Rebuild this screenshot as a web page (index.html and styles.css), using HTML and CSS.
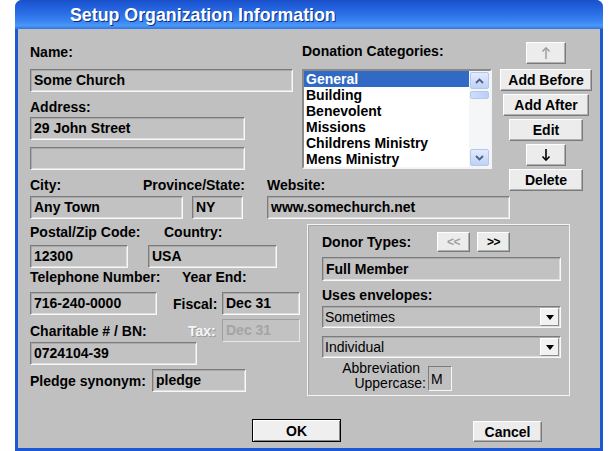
FILE: index.html
```html
<!DOCTYPE html>
<html>
<head>
<meta charset="utf-8">
<link rel="stylesheet" href="styles.css">
</head>
<body>
<div class="window">
  <div class="titlebar"><span class="title">Setup Organization Information</span></div>
  <div class="body">
    <div class="top">
      <div class="col-left">
        <div class="label lbl-name">Name:</div>
        <div class="field f-name">Some Church</div>
        <div class="label lbl-address">Address:</div>
        <div class="field f-addr1">29 John Street</div>
        <div class="field f-addr2"></div>
      </div>
      <div class="col-cats">
        <div class="label lbl-cats">Donation Categories:</div>
        <div class="listbox">
          <div class="list-items">
            <div class="item selected">General</div>
            <div class="item">Building</div>
            <div class="item">Benevolent</div>
            <div class="item">Missions</div>
            <div class="item">Childrens Ministry</div>
            <div class="item">Mens Ministry</div>
          </div>
          <div class="scrollbar">
            <div class="sb-btn"><svg width="9" height="6" viewBox="0 0 9 6"><polyline points="1,5 4.5,1.5 8,5" fill="none" stroke="#4d6185" stroke-width="1.8"/></svg></div>
            <div class="sb-thumb"></div>
            <div class="sb-track"></div>
            <div class="sb-btn"><svg width="9" height="6" viewBox="0 0 9 6"><polyline points="1,1 4.5,4.5 8,1" fill="none" stroke="#4d6185" stroke-width="1.8"/></svg></div>
          </div>
        </div>
      </div>
      <div class="col-btns">
        <div class="btn btn-arrow b-up disabled"><svg width="10" height="14" viewBox="0 0 10 14"><line x1="5" y1="2" x2="5" y2="13" stroke="#9a9a9a" stroke-width="1.4"/><polyline points="1.5,5.5 5,1.8 8.5,5.5" fill="none" stroke="#9a9a9a" stroke-width="1.4"/></svg></div>
        <div class="btn b-addbefore">Add Before</div>
        <div class="btn b-addafter">Add After</div>
        <div class="btn b-edit">Edit</div>
        <div class="btn btn-arrow b-down"><svg width="10" height="14" viewBox="0 0 10 14"><line x1="5" y1="1" x2="5" y2="12" stroke="#000" stroke-width="1.6"/><polyline points="1.5,8.5 5,12.2 8.5,8.5" fill="none" stroke="#000" stroke-width="1.6"/></svg></div>
        <div class="btn b-delete">Delete</div>
      </div>
    </div>

    <div class="row city-labels">
      <span class="label w-city">City:</span>
      <span class="label w-prov">Province/State:</span>
      <span class="label">Website:</span>
    </div>
    <div class="row city-fields">
      <div class="field f-city">Any Town</div>
      <div class="field f-state">NY</div>
      <div class="field f-web">www.somechurch.net</div>
    </div>

    <div class="lower">
      <div class="lower-left">
        <div class="row postal-labels">
          <span class="label w-postal">Postal/Zip Code:</span>
          <span class="label">Country:</span>
        </div>
        <div class="row postal-fields">
          <div class="field f-postal">12300</div>
          <div class="field f-country">USA</div>
        </div>
        <div class="row tel-labels">
          <span class="label w-tel">Telephone Number:</span>
          <span class="label">Year End:</span>
        </div>
        <div class="row phone-row">
          <div class="field f-phone">716-240-0000</div>
          <span class="label w-fiscal">Fiscal:</span>
          <div class="field f-date">Dec 31</div>
        </div>
        <div class="row char-row">
          <span class="label w-char">Charitable # / BN:</span>
          <span class="label w-tax disabled-label">Tax:</span>
          <div class="field f-date field-disabled">Dec 31</div>
        </div>
        <div class="field f-char">0724104-39</div>
        <div class="row pledge-row">
          <span class="label w-pledge">Pledge synonym:</span>
          <div class="field f-pledge">pledge</div>
        </div>
      </div>

      <div class="group">
        <div class="row donor-row">
          <span class="label w-donor">Donor Types:</span>
          <div class="btn btn-small disabled">&lt;&lt;</div>
          <div class="btn btn-small b-next">&gt;&gt;</div>
        </div>
        <div class="field f-member">Full Member</div>
        <div class="label lbl-env">Uses envelopes:</div>
        <div class="field combo c-first"><span>Sometimes</span><span class="dd"><span class="tri"></span></span></div>
        <div class="field combo c-second"><span>Individual</span><span class="dd"><span class="tri"></span></span></div>
        <div class="row abbr-row">
          <div class="abbr-label"><span class="abbr-1">Abbreviation</span><br>Uppercase:</div>
          <div class="mbox">M</div>
        </div>
      </div>
    </div>

    <div class="footer">
      <div class="btn b-ok">OK</div>
      <div class="btn b-cancel">Cancel</div>
    </div>
  </div>
</div>
</body>
</html>
```

FILE: styles.css
```css
* { box-sizing: border-box; }

body {
  margin: 0;
  background: #ffffff;
  font-family: "Liberation Sans", Arial, sans-serif;
  font-size: 14px;
  font-weight: bold;
  color: #000;
}

.window {
  margin-left: 15px;
  width: 588px;
  height: 451px;
  border-radius: 7px 7px 0 0;
  overflow: hidden;
  background: #1d58d4;
  display: flex;
  flex-direction: column;
}

.titlebar {
  height: 29px;
  flex: none;
  background: linear-gradient(to bottom, #1a50c8 0%, #1f5cd8 18%, #2a6de4 45%, #3883f0 72%, #4b97f7 88%, #3275e2 100%);
  padding-left: 55px;
  padding-top: 2px;
  display: flex;
  align-items: center;
}

.title {
  color: #fff;
  font-size: 17.8px;
  font-weight: bold;
  text-shadow: 1px 1px 0 #0b2d8a;
}

.body {
  flex: 1;
  margin: 0 3px 3px 3px;
  background: #c0c0c0;
  padding-left: 12px;
  display: flex;
  flex-direction: column;
}

.label {
  display: block;
  height: 16px;
  line-height: 16px;
  white-space: nowrap;
}

.row { display: flex; align-items: center; }

.field {
  height: 23px;
  background: #c2c2c2;
  border: 1px solid;
  border-color: #7c7c7c #f8f8f8 #f8f8f8 #7c7c7c;
  box-shadow: inset 1px 1px 0 #a9a9a9, inset -1px -1px 0 #dedede;
  padding-left: 3px;
  line-height: 21px;
  white-space: nowrap;
  overflow: hidden;
}

/* top section */
.top { display: flex; align-items: flex-start; }

.col-left { width: 263px; display: flex; flex-direction: column; }
.lbl-name { margin-top: 15px; }
.f-name { margin-top: 9px; width: 263px; }
.lbl-address { margin-top: 7px; }
.f-addr1 { margin-top: 2px; width: 215px; }
.f-addr2 { margin-top: 7px; width: 215px; }

.col-cats { margin-left: 9px; width: 190px; display: flex; flex-direction: column; }
.lbl-cats { margin-top: 14px; }

.listbox {
  margin-top: 10px;
  width: 190px;
  height: 100px;
  background: #fff;
  border: 2px solid;
  border-color: #8a8a8a #f4f4f4 #f4f4f4 #8a8a8a;
  display: flex;
}
.list-items { flex: 1; overflow: hidden; }
.item { height: 16px; line-height: 16px; padding-left: 2px; white-space: nowrap; }
.item.selected { background: #316ac5; color: #fff; }

.scrollbar {
  width: 21px;
  display: flex;
  flex-direction: column;
  background: #f5f6f8;
  padding: 1px 1px 1px 1px;
}
.sb-btn {
  height: 17px;
  background: linear-gradient(to bottom, #e2eafd, #bfd1f8);
  border: 1px solid #b4c7f0;
  border-radius: 2px;
  display: flex;
  align-items: center;
  justify-content: center;
}
.sb-thumb {
  margin-top: 2px;
  height: 8px;
  background: linear-gradient(to right, #cfdcfb, #bccff8);
  border: 1px solid #b4c7f0;
  border-radius: 2px;
}
.sb-track { flex: 1; }

.col-btns {
  margin-left: 8px;
  width: 92px;
  display: flex;
  flex-direction: column;
  align-items: center;
  margin-bottom: -21px;
}

.btn {
  height: 22px;
  background: #ececec;
  border: 1px solid;
  border-color: #ffffff #7a7a7a #7a7a7a #ffffff;
  box-shadow: inset -1px -1px 0 #b0b0b0;
  display: flex;
  align-items: center;
  justify-content: center;
  white-space: nowrap;
}
.btn.disabled { color: #a0a0a0; }

.btn-arrow { width: 40px; }
.b-up { margin-top: 13px; }
.b-addbefore { margin-top: 5px; width: 92px; }
.b-addafter { margin-top: 3px; width: 86px; }
.b-edit { margin-top: 3px; width: 74px; }
.b-down { margin-top: 3px; }
.b-delete { margin-top: 3px; width: 74px; }

/* city */
.city-labels { margin-top: 7px; }
.w-city { width: 113px; }
.w-prov { width: 124px; }
.city-fields { margin-top: 3px; }
.f-city { width: 153px; }
.f-state { width: 51px; margin-left: 9px; }
.f-web { width: 243px; margin-left: 24px; }

/* lower */
.lower { display: flex; align-items: flex-start; }
.lower-left { width: 270px; display: flex; flex-direction: column; }

.postal-labels { margin-top: 5px; }
.w-postal { width: 134px; }
.postal-fields { margin-top: 5px; }
.f-postal { width: 98px; }
.f-country { width: 129px; margin-left: 20px; }

.tel-labels { margin-top: 1px; }
.w-tel { width: 152px; }

.phone-row { margin-top: 7px; }
.f-phone { width: 127px; }
.w-fiscal { width: 49px; margin-left: 16px; }
.f-date { width: 78px; }

.char-row { margin-top: 4px; }
.w-char { width: 158px; }
.w-tax { width: 34px; }
.disabled-label { color: #f6f6f6; text-shadow: 1px 1px 0 #9a9a9a; }
.field-disabled {
  color: #a4a4a4;
  border-color: #a0a0a0 #e8e8e8 #e8e8e8 #a0a0a0;
  box-shadow: none;
}

.f-char { width: 167px; }

.pledge-row { margin-top: 4px; }
.w-pledge { width: 122px; }
.f-pledge { width: 94px; }

/* group */
.group {
  margin-left: 7px;
  margin-top: 5px;
  width: 263px;
  height: 172px;
  border: 1px solid #f4f4f4;
  box-shadow: inset 1px 1px 0 #a8a8a8;
  padding-left: 14px;
  display: flex;
  flex-direction: column;
}
.donor-row { margin-top: 7px; height: 20px; }
.w-donor { width: 115px; }
.btn-small { width: 33px; height: 20px; font-size: 12px; letter-spacing: -0.5px; }
.b-next { margin-left: 7px; }

.f-member { margin-top: 5px; width: 239px; height: 24px; line-height: 22px; }
.lbl-env { margin-top: 6px; }

.combo {
  width: 239px;
  height: 22px;
  font-weight: normal;
  display: flex;
  align-items: center;
  padding-left: 2px;
  padding-right: 1px;
  line-height: 20px;
}
.c-first { margin-top: 3px; }
.c-second { margin-top: 8px; }
.dd {
  margin-left: auto;
  width: 19px;
  height: 18px;
  background: #f2f2f2;
  border: 1px solid;
  border-color: #ffffff #8a8a8a #8a8a8a #ffffff;
  display: flex;
  align-items: center;
  justify-content: center;
}
.tri {
  width: 0;
  height: 0;
  border-left: 4px solid transparent;
  border-right: 4px solid transparent;
  border-top: 5px solid #000;
}

.abbr-row { margin-top: 3px; align-items: flex-end; }
.abbr-label {
  width: 104px;
  text-align: right;
  font-weight: normal;
  line-height: 15px;
}
.abbr-1 { margin-right: 6px; }
.mbox {
  margin-left: 2px;
  width: 24px;
  height: 25px;
  border: 1px solid;
  border-color: #7c7c7c #f8f8f8 #f8f8f8 #7c7c7c;
  font-weight: normal;
  display: flex;
  align-items: center;
  padding-left: 2px;
}

/* footer */
.footer { display: flex; align-items: flex-start; margin-top: 23px; }
.b-ok {
  margin-left: 222px;
  width: 89px;
  height: 23px;
  border: 1px solid #000;
  background: #efefef;
  box-shadow: inset 1px 1px 0 #fff, inset -1px -1px 0 #8a8a8a;
}
.b-cancel { margin-left: 132px; margin-top: 2px; width: 69px; height: 21px; }
```
